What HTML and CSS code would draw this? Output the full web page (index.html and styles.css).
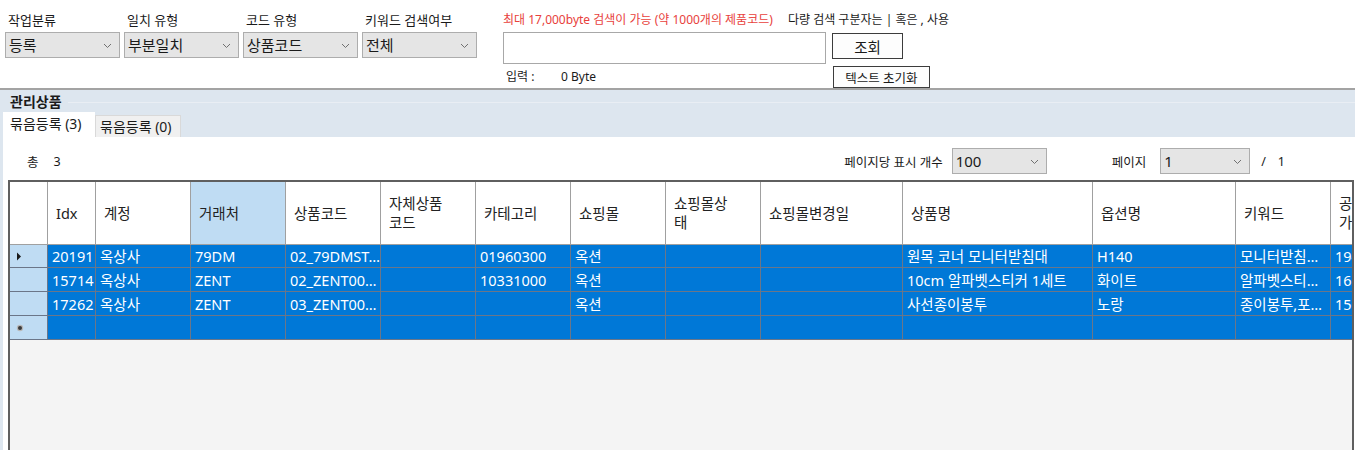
FILE: index.html
```html
<!DOCTYPE html>
<html lang="ko">
<head>
    <meta charset="utf-8">
    <meta name="viewport" content="width=device-width, initial-scale=1.0">
    <link rel="stylesheet" href="styles.css">
</head>
<body>
    <div class="top">
        <div class="filters">
            <div class="field">
                <label>작업분류</label>
                <div class="combo">등록<svg class="arrow" width="9" height="6" viewBox="0 0 9 6"><path d="M1 1 L4.5 4.5 L8 1" fill="none" stroke="#707070" stroke-width="1"/></svg></div>
            </div>
            <div class="field">
                <label>일치 유형</label>
                <div class="combo">부분일치<svg class="arrow" width="9" height="6" viewBox="0 0 9 6"><path d="M1 1 L4.5 4.5 L8 1" fill="none" stroke="#707070" stroke-width="1"/></svg></div>
            </div>
            <div class="field">
                <label>코드 유형</label>
                <div class="combo">상품코드<svg class="arrow" width="9" height="6" viewBox="0 0 9 6"><path d="M1 1 L4.5 4.5 L8 1" fill="none" stroke="#707070" stroke-width="1"/></svg></div>
            </div>
            <div class="field">
                <label>키워드 검색여부</label>
                <div class="combo">전체<svg class="arrow" width="9" height="6" viewBox="0 0 9 6"><path d="M1 1 L4.5 4.5 L8 1" fill="none" stroke="#707070" stroke-width="1"/></svg></div>
            </div>
        </div>
        <div class="search">
            <div class="notes">
                <span class="red">최대 17,000byte 검색이 가능 (약 1000개의 제품코드)</span>
                <span class="sep">다량 검색 구분자는 | 혹은 , 사용</span>
            </div>
            <div class="line">
                <div class="textbox"></div>
                <button type="button" class="btn">조회</button>
            </div>
            <div class="line second">
                <span class="input-lbl">입력 :</span>
                <span class="bytes">0 Byte</span>
                <button type="button" class="btn small">텍스트 초기화</button>
            </div>
        </div>
    </div>

    <div class="panel">
        <div class="panel-title"><b>관리상품</b><span class="title-line"></span></div>
        <div class="tabs">
            <div class="tab active">묶음등록 (3)</div>
            <div class="tab">묶음등록 (0)</div>
        </div>
        <div class="tab-body">
            <div class="summary">
                <span class="total">총</span><span class="total-num">3</span>
                <div class="pager">
                    <span>페이지당 표시 개수</span>
                    <div class="combo size">100<svg class="arrow" width="9" height="6" viewBox="0 0 9 6"><path d="M1 1 L4.5 4.5 L8 1" fill="none" stroke="#707070" stroke-width="1"/></svg></div>
                    <span class="page-lbl">페이지</span>
                    <div class="combo page">1<svg class="arrow" width="9" height="6" viewBox="0 0 9 6"><path d="M1 1 L4.5 4.5 L8 1" fill="none" stroke="#707070" stroke-width="1"/></svg></div>
                    <span class="slash">/</span><span>1</span>
                </div>
            </div>
            <div class="grid-wrap">
                <table class="grid">
                    <colgroup>
                        <col style="width:38px"><col style="width:48px"><col style="width:95px"><col style="width:95px">
                        <col style="width:95px"><col style="width:95px"><col style="width:95px"><col style="width:95px">
                        <col style="width:95px"><col style="width:142px"><col style="width:190px"><col style="width:143px">
                        <col style="width:95px"><col style="width:95px">
                    </colgroup>
                    <thead>
                        <tr>
                            <th class="rh"></th>
                            <th>Idx</th>
                            <th>계정</th>
                            <th class="sel">거래처</th>
                            <th>상품코드</th>
                            <th>자체상품<br>코드</th>
                            <th>카테고리</th>
                            <th>쇼핑몰</th>
                            <th>쇼핑몰상<br>태</th>
                            <th>쇼핑몰변경일</th>
                            <th>상품명</th>
                            <th>옵션명</th>
                            <th>키워드</th>
                            <th>공급<br>가격</th>
                        </tr>
                    </thead>
                    <tbody>
                        <tr class="first">
                            <td class="rh"><svg width="6" height="9" viewBox="0 0 6 9"><path d="M1 0.5 L5 4.5 L1 8.5 Z" fill="#1a1a1a"/></svg></td>
                            <td>20191</td><td>옥상사</td><td>79DM</td><td>02_79DMST…</td><td></td>
                            <td>01960300</td><td>옥션</td><td></td><td></td>
                            <td>원목 코너 모니터받침대</td><td>H140</td><td>모니터받침…</td><td>19400</td>
                        </tr>
                        <tr>
                            <td class="rh"></td>
                            <td>15714</td><td>옥상사</td><td>ZENT</td><td>02_ZENT00…</td><td></td>
                            <td>10331000</td><td>옥션</td><td></td><td></td>
                            <td>10cm 알파벳스티커 1세트</td><td>화이트</td><td>알파벳스티…</td><td>16200</td>
                        </tr>
                        <tr>
                            <td class="rh"></td>
                            <td>17262</td><td>옥상사</td><td>ZENT</td><td>03_ZENT00…</td><td></td>
                            <td></td><td>옥션</td><td></td><td></td>
                            <td>사선종이봉투</td><td>노랑</td><td>종이봉투,포…</td><td>15000</td>
                        </tr>
                        <tr>
                            <td class="rh"><svg width="8" height="8" viewBox="0 0 8 8"><circle cx="4" cy="4" r="3.2" fill="#b8b8b8"/><circle cx="4" cy="4" r="2" fill="#3a3a3a"/></svg></td>
                            <td></td><td></td><td></td><td></td><td></td>
                            <td></td><td></td><td></td><td></td>
                            <td></td><td></td><td></td><td></td>
                        </tr>
                    </tbody>
                </table>
            </div>
        </div>
    </div>
</body>
</html>
```

FILE: styles.css
```css
* {
    box-sizing: border-box;
}

html, body {
    margin: 0;
    padding: 0;
    width: 1355px;
    height: 450px;
    overflow: hidden;
    background: #ffffff;
    font-family: "Noto Sans", "Noto Sans CJK KR", sans-serif;
    color: #1a1a1a;
}

/* top search area */
div.top {
    display: flex;
    height: 90px;
    padding: 12px 0 0 5px;
    border-bottom: 2px solid #a3a3a3;
    background: #ffffff;
}

div.filters {
    display: flex;
    gap: 4px;
}

div.field {
    display: flex;
    flex-direction: column;
    width: 115px;
}

div.field label {
    font-size: 13px;
    line-height: 16px;
    padding-left: 3px;
    height: 16px;
    white-space: nowrap;
}

div.combo {
    position: relative;
    height: 26px;
    margin-top: 4px;
    background: #e5e5e5;
    border: 1px solid #adadad;
    font-size: 15px;
    line-height: 24px;
    padding-left: 3px;
    white-space: nowrap;
}

div.combo .arrow {
    position: absolute;
    right: 7px;
    top: 10px;
}

div.search {
    margin-left: 26px;
    display: flex;
    flex-direction: column;
}

div.notes {
    font-size: 12px;
    line-height: 16px;
    height: 16px;
    white-space: nowrap;
}

span.red {
    color: #e8413c;
}

span.sep {
    margin-left: 12px;
}

div.line {
    display: flex;
    align-items: flex-start;
    margin-top: 4px;
}

div.textbox {
    width: 323px;
    height: 32px;
    border: 1px solid #a8a8a8;
    background: #ffffff;
}

button.btn {
    margin: 1px 0 0 6px;
    width: 71px;
    height: 26px;
    padding: 0;
    border: 1px solid #3c3c3c;
    background: #fdfdfd;
    font-family: "Noto Sans", "Noto Sans CJK KR", sans-serif;
    font-size: 14.5px;
    color: #1a1a1a;
}

div.line.second {
    margin-top: 0;
    align-items: center;
    height: 24px;
    font-size: 12px;
}

span.input-lbl {
    width: 58px;
    padding-left: 3px;
}

span.bytes {
    width: 272px;
}

button.btn.small {
    margin: 2px 0 0 0;
    width: 97px;
    height: 22px;
    font-size: 12.5px;
}

/* lower panel */
div.panel {
    background: #dde6ef;
    height: 360px;
    overflow: hidden;
}

div.panel-title {
    display: flex;
    align-items: center;
    height: 22px;
    padding-left: 10px;
    font-size: 14px;
}

span.title-line {
    flex: 1;
    height: 1px;
    margin: 2px 0 0 6px;
    background: #e9eef4;
}

div.tabs {
    display: flex;
    align-items: flex-end;
    height: 25px;
    padding-left: 3px;
}

div.tab {
    height: 22px;
    width: 86px;
    font-size: 14px;
    line-height: 21px;
    padding-left: 4px;
    background: #f0f0f0;
    border: 1px solid #d9d9d9;
    border-bottom: none;
    white-space: nowrap;
}

div.tab.active {
    width: 92px;
    height: 25px;
    line-height: 24px;
    padding-left: 7px;
    background: #ffffff;
    border: none;
}

div.tab-body {
    margin-left: 3px;
    background: #ffffff;
    height: 313px;
    padding-top: 11px;
    overflow: hidden;
}

div.summary {
    display: flex;
    align-items: center;
    height: 26px;
    font-size: 12.5px;
    padding-left: 24px;
}

span.total-num {
    margin-left: 15px;
}

div.pager {
    display: flex;
    align-items: center;
    margin-left: auto;
    margin-right: 70px;
}

div.pager .combo {
    margin: 0 0 0 9px;
    height: 26px;
}

div.combo.size {
    width: 95px;
}

div.pager .combo.page {
    width: 90px;
    margin-left: 14px;
}

span.page-lbl {
    margin-left: 65px;
}

span.slash {
    margin: 0 12px 0 11px;
}

/* data grid */
div.grid-wrap {
    margin: 6px 1px 0 5px;
    height: 300px;
    border: 2px solid #5f5f5f;
    border-bottom: none;
    background: #f4f4f4;
    overflow: hidden;
}

table.grid {
    table-layout: fixed;
    width: 1416px;
    border-collapse: separate;
    border-spacing: 0;
    font-size: 14.5px;
}

table.grid th {
    height: 63px;
    padding: 0 0 0 8px;
    background: #ffffff;
    border-right: 1px solid #a0a0a0;
    border-bottom: 1px solid #a0a0a0;
    font-weight: normal;
    text-align: left;
    line-height: 19px;
    color: #222222;
    white-space: nowrap;
    overflow: hidden;
}

table.grid th.sel {
    background: #bfdcf3;
}

table.grid td {
    height: 24px;
    padding: 0 0 0 4px;
    background: #0078d7;
    color: #ffffff;
    border-right: 1px solid #6b7688;
    border-bottom: 1px solid #6b7688;
    white-space: nowrap;
    overflow: hidden;
    line-height: 22px;
}

table.grid tr.first td {
    height: 23px;
}

table.grid td.rh {
    background: #bfdcf3;
    padding-left: 6px;
}

table.grid td.rh svg {
    display: block;
}
```
